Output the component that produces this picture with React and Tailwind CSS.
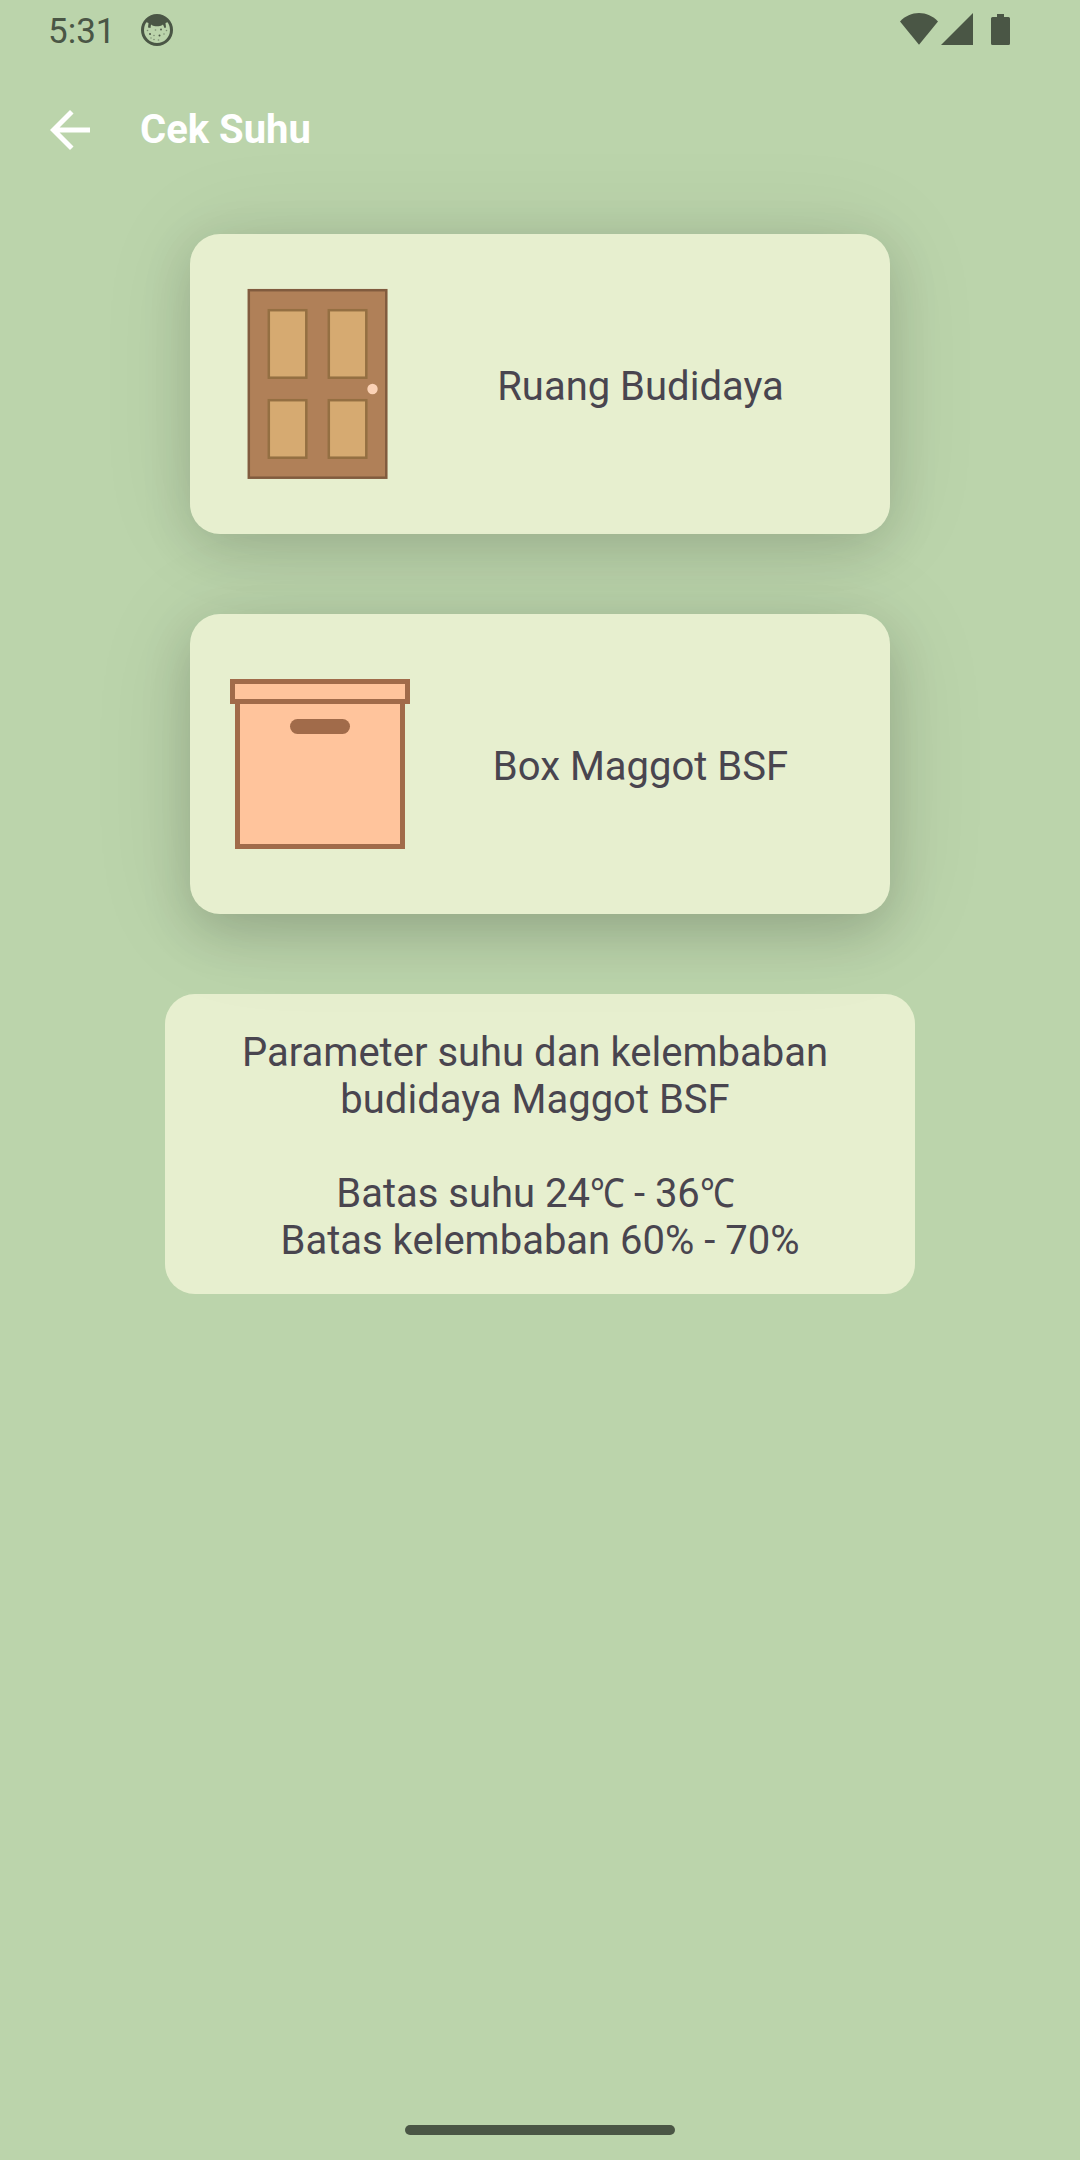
function FaceIcon() {
  return (
    <svg className="block h-8 w-8" viewBox="0 0 32 32" fill="#4a5645">
      <circle cx="16" cy="16" r="14.500" fill="none" stroke="#4a5645" strokeWidth="3" />
      <path d="M5 8C8 3.500 12 1.500 16 1.500S24 3.500 27 8l-2.500 1 .5 4.500-1.500.5-1.500-3.500c-2 1.500-4 1.800-6 1.800s-4-.3-6-1.800L9.500 14 7 13.500 7.500 9z" />
      <circle cx="9" cy="20" r="1" />
      <circle cx="18.500" cy="21.500" r="1" />
      <circle cx="20" cy="15.500" r=".9" />
      <g opacity=".55">
        <circle cx="14.500" cy="16" r=".8" />
        <circle cx="13" cy="21.500" r=".8" />
        <circle cx="23" cy="20" r=".8" />
        <circle cx="17.500" cy="26" r=".8" />
        <circle cx="13" cy="25.500" r=".8" />
        <circle cx="6.500" cy="16.500" r=".8" />
        <circle cx="25.500" cy="16.500" r=".8" />
        <circle cx="10" cy="24" r=".7" />
      </g>
    </svg>
  );
}

function StatusBar() {
  return (
    <div className="flex h-[60px] items-start text-[#4a5645]">
      <div className="ml-[48px] w-[93px] pt-[11px] text-[35px] leading-[41px]">5:31</div>
      <div className="pt-[14px]"><FaceIcon /></div>
      <svg className="ml-auto mr-[70px] mt-[12px] block" width="118" height="36" viewBox="0 0 118 36" fill="#4a5645">
        <path d="M8 9.500C13 4 20 1 27 1s14 3 19 8.500L27 32.800z" />
        <path d="M81 1v32H49z" />
        <path d="M105 2h7v3h4.500q1.500 0 1.500 1.500v25q0 1.500-1.500 1.500h-16q-1.500 0-1.500-1.500v-25q0-1.500 1.500-1.500h4.500z" />
      </svg>
    </div>
  );
}

function AppBar() {
  return (
    <header className="flex h-[140px] items-center pl-[50px]">
      <svg className="block" width="40" height="40" viewBox="4 4 16 16" fill="#fff">
        <path d="M20 11H7.830l5.590-5.590L12 4l-8 8 8 8 1.410-1.410L7.830 13H20v-2z" />
      </svg>
      <h1 className="-mt-px ml-[50px] text-[40px] font-bold leading-[47px] text-white">Cek Suhu</h1>
    </header>
  );
}

function Door() {
  return (
    <svg className="block h-[200px] w-[200px]" viewBox="0 0 200 200">
      <rect x="28.800" y="6.200" width="137.500" height="187.500" fill="#b08058" stroke="#815b3e" strokeWidth="2.500" />
      <g fill="#d6aa71" stroke="#946f42" strokeWidth="2.500">
        <rect x="48.800" y="26.200" width="37.500" height="67.500" />
        <rect x="108.800" y="26.200" width="37.500" height="67.500" />
        <rect x="48.800" y="116.200" width="37.500" height="57.500" />
        <rect x="108.800" y="116.200" width="37.500" height="57.500" />
      </g>
      <circle cx="152.500" cy="105" r="5.200" fill="#fbd2b6" />
    </svg>
  );
}

function Box() {
  return (
    <svg className="block h-[200px] w-[200px]" viewBox="0 0 200 200" fill="#ffc49c" stroke="#a16b4a" strokeWidth="5">
      <rect x="17.500" y="37.500" width="165" height="145" />
      <rect x="12.500" y="17.500" width="175" height="20" />
      <rect x="70" y="55" width="60" height="15" rx="7.500" fill="#a16b4a" stroke="none" />
    </svg>
  );
}

function RoomCard({ icon, label, shadow }) {
  return (
    <button className={`relative z-10 flex h-[300px] w-[700px] items-center rounded-[30px] bg-[#e7efcf] pl-[30px] text-left ${shadow}`}>
      {icon}
      <span className="w-[441px] pt-[4px] text-center text-[40px] leading-[47px]">{label}</span>
    </button>
  );
}

function Celsius() {
  return <span className="-mx-[3px] inline-block scale-x-[0.87]">℃</span>;
}

export default function App() {
  return (
    <div className="flex h-[2160px] w-[1080px] flex-col overflow-hidden bg-[#bbd4ab] font-[Roboto,sans-serif]">
      <StatusBar />
      <AppBar />
      <main className="flex flex-1 flex-col items-center gap-[80px] pt-[34px] text-[#49454f]">
        <RoomCard
          icon={<Door />}
          label="Ruang Budidaya"
          shadow="shadow-[0_0_100px_rgba(0,0,0,0.08),0_12px_50px_rgba(0,0,0,0.14)]"
        />
        <RoomCard
          icon={<Box />}
          label="Box Maggot BSF"
          shadow="shadow-[0_8px_110px_rgba(0,0,0,0.09),0_18px_50px_rgba(0,0,0,0.16)]"
        />
        <section className="flex h-[300px] w-[750px] flex-col rounded-[30px] bg-[#e7efcf] pt-[35px] text-center text-[40px] leading-[47px]">
          <p className="whitespace-pre">{"Parameter suhu dan kelembaban \nbudidaya Maggot BSF "}</p>
          <p className="mt-[47px] whitespace-pre">
            Batas suhu 24<Celsius /> - 36<Celsius />{" \nBatas kelembaban 60% - 70%"}
          </p>
        </section>
      </main>
      <div className="mb-[25px] h-[10px] w-[270px] self-center rounded-full bg-[#4a5645]" />
    </div>
  );
}
